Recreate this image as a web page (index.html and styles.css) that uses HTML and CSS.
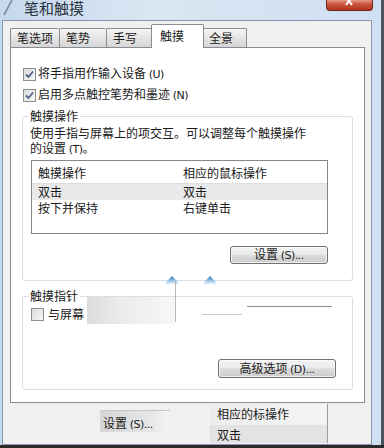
FILE: index.html
```html
<!DOCTYPE html>
<html lang="zh-CN">
<head>
  <meta charset="UTF-8" />
  <meta name="viewport" content="width=device-width, initial-scale=1.0"/>
  <title>笔和触摸</title>
  <link rel="stylesheet" href="styles.css">
</head>
<body>
  <div class="window">

    <!-- Title bar -->
    <div class="titlebar">
      <svg class="pen-icon" width="12" height="16" viewBox="0 0 12 16">
        <path d="M2 15 L10 0" stroke="#7d8a99" stroke-width="1.6" fill="none"/>
      </svg>
      <span class="title">笔和触摸</span>
      <div class="close-btn">
        <svg width="12" height="6" viewBox="0 0 12 6">
          <path d="M2 -3 L8 5 M8 -3 L2 5" stroke="#fff" stroke-width="2" fill="none"/>
        </svg>
      </div>
    </div>

    <div class="client">
      <!-- Tabs -->
      <div class="tabs">
        <div class="tab">笔选项</div>
        <div class="tab">笔势</div>
        <div class="tab">手写</div>
        <div class="tab active">触摸</div>
        <div class="tab">全景</div>
      </div>

      <div class="panel">
        <div class="check-row">
          <span class="checkbox checked">
            <svg width="11" height="11" viewBox="0 0 11 11"><path d="M2 5.5 L4.5 8 L9 2.5" stroke="#4f6285" stroke-width="1.8" fill="none"/></svg>
          </span>
          <span>将手指用作输入设备 <span class="key">(U)</span></span>
        </div>
        <div class="check-row">
          <span class="checkbox checked">
            <svg width="11" height="11" viewBox="0 0 11 11"><path d="M2 5.5 L4.5 8 L9 2.5" stroke="#4f6285" stroke-width="1.8" fill="none"/></svg>
          </span>
          <span>启用多点触控笔势和墨迹 <span class="key">(N)</span></span>
        </div>

        <!-- Touch actions -->
        <fieldset class="group group-actions">
          <legend>触摸操作</legend>
          <p class="desc">使用手指与屏幕上的项交互。可以调整每个触摸操作</p>
          <p class="desc">的设置 <span class="key">(T)</span>。</p>
          <div class="list">
            <div class="list-row list-head"><span class="col1">触摸操作</span><span>相应的鼠标操作</span></div>
            <div class="list-row selected"><span class="col1">双击</span><span>双击</span></div>
            <div class="list-row"><span class="col1">按下并保持</span><span>右键单击</span></div>
          </div>
          <div class="btn-row">
            <button class="btn btn-settings">设置 <span class="key">(S)...</span></button>
          </div>
        </fieldset>

        <!-- Touch pointer -->
        <fieldset class="group group-pointer">
          <legend>触摸指针</legend>
          <div class="check-row">
            <span class="checkbox"></span>
            <span>与屏幕</span>
          </div>
          <div class="btn-row">
            <button class="btn btn-advanced">高级选项 <span class="key">(D)...</span></button>
          </div>
        </fieldset>

        <!-- stray bits from the capture, lying over the groups -->
        <div class="marker marker-a"></div>
        <div class="marker marker-b"></div>
        <div class="smear"></div>
        <div class="smear-line"></div>
        <div class="stray stray-a"></div>
        <div class="stray stray-b"></div>
      </div>

      <div class="ghost-row">
        <div class="ghost-btn">设置 <span class="key">(S)...</span></div>
        <div class="ghost-list">
          <div class="ghost-head">相应的标操作</div>
          <div class="ghost-item">双击</div>
        </div>
      </div>
    </div>
  </div>
</body>
</html>
```

FILE: styles.css
```css
* { box-sizing: border-box; }

body {
  margin: 0;
  width: 384px;
  height: 448px;
  overflow: hidden;
  font-family: "Noto Sans CJK SC", "Noto Sans", sans-serif;
  font-size: 12px;
  color: #1a1a1a;
  background: #c9dbee;
}

.window {
  display: flex;
  flex-direction: column;
  height: 448px;
  padding: 0 12px 0 2px;
  background: linear-gradient(to right, #c6d8ec, #d9e6f3 40%, #cfe0f1);
  border-bottom: 3px solid #2a2a2a;
  box-shadow: inset -3px 0 0 #4a5560;
}

/* title bar */
.titlebar {
  display: flex;
  align-items: flex-start;
  height: 20px;
  flex-shrink: 0;
}

.pen-icon {
  margin: 0 10px 0 0;
}

.title {
  font-size: 15px;
  line-height: 15px;
  margin-top: 0;
  color: #27323d;
}

.close-btn {
  margin-left: auto;
  margin-right: -1px;
  width: 47px;
  height: 11px;
  display: flex;
  justify-content: center;
  background: linear-gradient(#e59a88, #c8503a 45%, #b13621);
  border: 1px solid #6e2418;
  border-top: none;
  border-radius: 0 0 4px 4px;
}

/* client area */
.client {
  flex: 1;
  display: flex;
  flex-direction: column;
  background: #f0f0f0;
  border: 1px solid #8799ab;
  padding: 4px 6px 0 7px;
}

.tabs {
  display: flex;
  align-items: flex-end;
  height: 22px;
  position: relative;
  z-index: 1;
}

.tab {
  min-width: 47px;
  height: 19px;
  line-height: 18px;
  padding: 0 6px 0 6px;
  background: linear-gradient(#f7f7f7, #e4e4e4 50%, #d6d6d6);
  border: 1px solid #898c95;
  border-bottom: none;
  border-right: none;
  border-radius: 2px 2px 0 0;
}

.tab:nth-child(5) {
  min-width: 45px;
  border-right: 1px solid #898c95;
}

.tab.active {
  min-width: 53px;
  height: 24px;
  margin: 0 -2px -1px -2px;
  padding: 2px 9px 0 8px;
  background: #fff;
  border-right: 1px solid #898c95;
  position: relative;
  z-index: 2;
}

.panel {
  position: relative;
  height: 356px;
  flex-shrink: 0;
  background: #fff;
  border: 1px solid #898c95;
  padding: 18px 12px 0 12px;
}

.check-row {
  display: flex;
  align-items: center;
  gap: 2px;
  height: 16px;
  line-height: 16px;
  margin-bottom: 5px;
}

.checkbox {
  width: 13px;
  height: 13px;
  border: 1px solid #8e8f8f;
  background: linear-gradient(135deg, #dcdcdc, #f6f6f6);
  display: flex;
  align-items: center;
  justify-content: center;
}

.key {
  font-size: 11px;
  font-family: "DejaVu Sans", sans-serif;
  letter-spacing: -0.5px;
}

/* group boxes */
.group {
  margin: 0 -1px 0 -1px;
  border: 1px solid #d5dfe5;
  border-radius: 3px;
  min-width: 0;
}

.group legend {
  line-height: 16px;
  padding: 0 2px;
  margin-left: -3px;
}

.group-actions {
  padding: 0 24px 16px 8px;
}

.group-pointer {
  margin-top: 7px;
  padding: 0 16px 11px 8px;
}

.group-pointer .check-row {
  margin: 2px 0 0 0;
  gap: 4px;
}

.desc {
  margin: 0 0 0 -1px;
  height: 15px;
  line-height: 15px;
  white-space: nowrap;
}

.desc:first-of-type {
  margin-top: 1px;
}

.list {
  margin-top: 5px;
  height: 74px;
  border: 1px solid #828790;
}

.list-row {
  display: flex;
  line-height: 16px;
  padding-left: 6px;
}

.list-head {
  height: 23px;
  padding-top: 3px;
  line-height: 18px;
  border-bottom: 1px solid #dedede;
}

.list-row.selected {
  background: #e9e9e9;
}

.col1 {
  width: 145px;
}

.btn-row {
  display: flex;
  justify-content: flex-end;
}

.btn {
  font-family: inherit;
  font-size: 12px;
  color: #1a1a1a;
  height: 18px;
  line-height: 14px;
  padding: 0;
  border: 1px solid #707070;
  border-radius: 3px;
  background: linear-gradient(#f4f4f4, #e9e9e9 48%, #dadada 52%, #cdcdcd);
  box-shadow: inset 0 0 0 1px rgba(255,255,255,0.7);
}

.btn-settings {
  width: 98px;
  margin-top: 12px;
}

.btn-advanced {
  width: 118px;
  height: 19px;
  margin-top: 37px;
}

/* stray capture artefacts */
.marker {
  position: absolute;
  top: 228px;
  width: 12px;
  height: 9px;
  background: linear-gradient(#2f78b8, #a9cdea 60%, rgba(210,230,246,0));
  clip-path: polygon(50% 0, 100% 70%, 100% 100%, 0 100%, 0 70%);
}
.marker-a { left: 155px; }
.marker-b { left: 193px; }

.smear {
  position: absolute;
  left: 76px;
  top: 249px;
  width: 88px;
  height: 27px;
  background: linear-gradient(to right, #dcdcdc, #ececec 40%, #f7f7f7);
}

.smear-line {
  position: absolute;
  left: 164px;
  top: 232px;
  width: 1px;
  height: 42px;
  background: #b9b9b9;
}

.stray {
  position: absolute;
  height: 1px;
}
.stray-a { left: 236px; top: 258px; width: 85px; background: #8f8f8f; }
.stray-b { left: 191px; top: 266px; width: 40px; background: #c8c8c8; }

/* bits of a second window under the dialog */
.ghost-row {
  display: flex;
  align-items: flex-start;
  gap: 40px;
  padding-left: 90px;
  flex: 1;
}

.ghost-btn {
  margin-top: 7px;
  width: 70px;
  height: 22px;
  padding: 4px 0 0 3px;
  line-height: 16px;
  border-top: 1px solid #c8c8c8;
  background: linear-gradient(to right, #d6d6d6, #e6e6e6 70%, #f3f3f3);
}

.ghost-list {
  width: 118px;
  margin-top: 1px;
  border-right: 1px solid #9a9a9a;
}

.ghost-head {
  height: 20px;
  padding: 2px 0 0 7px;
  line-height: 16px;
  background: linear-gradient(to right, #ececec, #f4f4f4);
}

.ghost-item {
  margin-top: 1px;
  height: 18px;
  padding: 2px 0 0 7px;
  line-height: 16px;
  background: #e3e3e3;
}
```
